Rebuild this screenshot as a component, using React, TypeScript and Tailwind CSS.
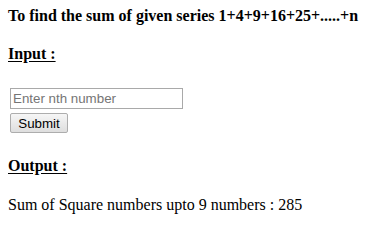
export default function App() {
  return (
    <div className="min-h-[228px] bg-white px-2 pt-[7px] text-[16px] text-black font-['Liberation_Serif',_'Times_New_Roman',_serif]">
      <div className="font-bold leading-[18px]">
        To find the sum of given series 1+4+9+16+25+.....+n
      </div>

      <div className="mt-[20px] font-bold leading-[18px] underline underline-offset-[2px]">
        Input :
      </div>

      <div className="mt-[25px] ml-[2px] flex flex-col items-start gap-[4px]">
        <input
          type="text"
          placeholder="Enter nth number"
          className="h-[21px] w-[173px] border border-[#a9a9a9] bg-white px-[2px] text-[13.33px] leading-[normal] font-['Liberation_Sans',_Arial,_sans-serif] text-black placeholder:text-[#757575] outline-none"
        />
        <button className="h-[20px] w-[58px] rounded-[2px] border border-[#adadad] bg-gradient-to-b from-[#f6f6f6] to-[#dedede] text-[13.33px] leading-[normal] font-['Liberation_Sans',_Arial,_sans-serif] text-black">
          Submit
        </button>
      </div>

      <div className="mt-[24px] font-bold leading-[18px] underline underline-offset-[2px]">
        Output :
      </div>

      <div className="mt-[21px] leading-[18px]">
        Sum of Square numbers upto 9 numbers : 285
      </div>
    </div>
  );
}
